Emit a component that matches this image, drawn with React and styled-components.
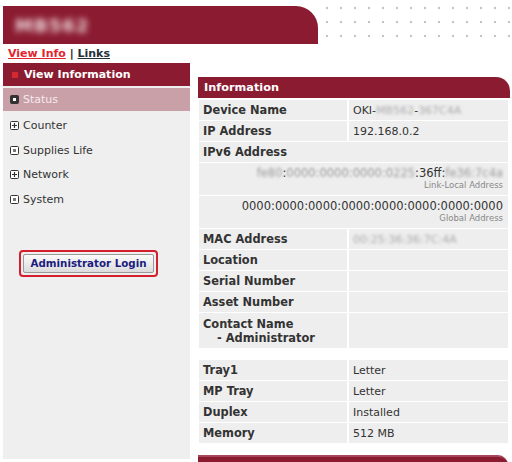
import styled, { createGlobalStyle } from "styled-components";

const Global = createGlobalStyle`
  body { margin: 0; background: #fff; font-family: "DejaVu Sans", Verdana, sans-serif; color: #333; }
`;

const RED = "#8b1b30";

const Page = styled.div`
  width: 512px;
  height: 462px;
  overflow: hidden;
  padding: 6px 2px 0 3px;
  box-sizing: border-box;
`;

const Header = styled.header`
  display: flex;
  height: 38px;
`;

const Banner = styled.div`
  width: 315px;
  background: ${RED};
  border-top-right-radius: 22px;
  display: flex;
  align-items: center;
  padding-left: 12px;
  box-sizing: border-box;
`;

const Blur = styled.span`
  display: inline-block;
  filter: blur(${(p) => p.$r || 1.6}px);
  color: ${(p) => p.$c || "#aaa"};
`;

const Title = styled.span`
  font-size: 18px;
  font-weight: bold;
  letter-spacing: 1px;
`;

const Dots = styled.div`
  flex: 1;
  margin-left: 2px;
  background-image: radial-gradient(circle, #c4c4c4 1.1px, transparent 1.6px);
  background-size: 14px 14px;
  background-position: 0 -5px;
`;

const Crumbs = styled.nav`
  font-size: 11px;
  font-weight: bold;
  padding: 3px 0 0 5px;
  height: 16px;
  color: #222;
`;

const Crumb = styled.a`
  color: ${(p) => (p.$active ? "#e2262f" : "#23303a")};
  text-decoration: underline;
`;

const Main = styled.div`
  display: flex;
  gap: 8px;
`;

const Sidebar = styled.aside`
  width: 187px;
  height: 396px;
  background: #efefef;
  flex-shrink: 0;
`;

const SideHead = styled.div`
  height: 23px;
  background: ${RED};
  color: #fff;
  font-weight: bold;
  font-size: 11px;
  display: flex;
  align-items: center;
  gap: 6px;
  padding-left: 9px;
`;

const Bullet = styled.span`
  width: 6px;
  height: 6px;
  background: #d42833;
`;

const NavList = styled.div`
  display: flex;
  flex-direction: column;
  padding-top: 2px;
`;

const NavItem = styled.div`
  height: ${(p) => (p.$active ? 23 : 24.7)}px;
  margin-bottom: ${(p) => (p.$active ? 2 : 0)}px;
  background: ${(p) => (p.$active ? "#c9a0a7" : "transparent")};
  color: ${(p) => (p.$active ? "#f4eaec" : "#333")};
  font-size: 11px;
  display: flex;
  align-items: center;
  gap: 4px;
  padding-left: 7px;
`;

const Box = ({ kind, dark }) => (
  <svg width="9" height="9" viewBox="0 0 9 9">
    <rect x="0.5" y="0.5" width="8" height="8" rx="1" fill={dark ? "#333" : "#fff"} stroke="#333" />
    {kind === "plus" ? (
      <path d="M2 4.5h5M4.5 2v5" stroke="#333" strokeWidth="1.2" />
    ) : (
      <rect x="3" y="3" width="3" height="3" fill={dark ? "#fff" : "#777"} />
    )}
  </svg>
);

const LoginWrap = styled.div`
  margin: 38px 0 0 16px;
  width: 139px;
  height: 27px;
  border: 2px solid #d61f2e;
  border-radius: 4px;
  box-sizing: border-box;
  padding: 2px;
  display: flex;
`;

const LoginButton = styled.button`
  flex: 1;
  border: 1px solid #9a9a9a;
  border-radius: 2px;
  background: linear-gradient(#fafafa, #dcdcdc);
  color: #1c1c80;
  font-family: "DejaVu Sans", Verdana, sans-serif;
  font-weight: bold;
  font-size: 10.3px;
  padding: 0;
`;

const Content = styled.section`
  flex: 1;
  padding-top: 14px;
`;

const PanelHead = styled.div`
  height: 21px;
  background: ${RED};
  border-top-right-radius: 14px;
  color: #fff;
  font-weight: bold;
  font-size: 11.3px;
  display: flex;
  align-items: center;
  padding-left: 6px;
`;

const Grid = styled.div`
  display: grid;
  grid-template-columns: 148px 1fr;
  gap: 1px 2px;
  margin: 2px 2px 0 1px;
  & + & { margin-top: 12px; }
`;

const Label = styled.div`
  background: #eeeeee;
  font-weight: bold;
  font-size: 11.4px;
  color: #333;
  padding: 0 4px;
  min-height: ${(p) => p.$h || 20}px;
  display: flex;
  flex-direction: column;
  justify-content: ${(p) => (p.$top ? "flex-start" : "center")};
  padding-top: ${(p) => (p.$top ? 4 : 0)}px;
  line-height: 14px;
  box-sizing: border-box;
  grid-column: ${(p) => (p.$wide ? "1 / -1" : "auto")};
`;

const Indent = styled.span`
  padding-left: 14px;
`;

const Value = styled.div`
  background: #eeeeee;
  font-size: 11px;
  color: #333;
  padding: 0 4px;
  min-height: ${(p) => p.$h || 20}px;
  display: flex;
  align-items: center;
`;

const Addr = styled.div`
  grid-column: 1 / -1;
  background: #eeeeee;
  height: 32px;
  padding: 3px 5px 0 0;
  box-sizing: border-box;
  text-align: right;
  font-size: 11.5px;
  color: #333;
  line-height: 14px;
`;

const Caption = styled.div`
  font-size: 8.5px;
  color: #888;
  line-height: 11px;
`;

const Footer = styled.div`
  margin: 12px 2px 0 0;
  height: 10px;
  background: ${RED};
  border-top-right-radius: 10px;
  border-top: 2px solid #a4485a;
`;

const navItems = [
  { name: "Status", kind: "dot", active: true },
  { name: "Counter", kind: "plus" },
  { name: "Supplies Life", kind: "dot" },
  { name: "Network", kind: "plus" },
  { name: "System", kind: "dot" },
];

const Row = ({ label, children, h, top }) => (
  <>
    <Label $h={h} $top={top}>{label}</Label>
    <Value $h={h}>{children}</Value>
  </>
);

export default function App() {
  return (
    <Page>
      <Global />
      <Header>
        <Banner>
          <Title><Blur $r={3} $c="#f0dde1">MB562</Blur></Title>
        </Banner>
        <Dots />
      </Header>
      <Crumbs>
        <Crumb $active>View Info</Crumb> | <Crumb>Links</Crumb>
      </Crumbs>
      <Main>
        <Sidebar>
          <SideHead><Bullet />View Information</SideHead>
          <NavList>
            {navItems.map((n) => (
              <NavItem key={n.name} $active={n.active}>
                <Box kind={n.kind} dark={n.active} />
                {n.name}
              </NavItem>
            ))}
          </NavList>
          <LoginWrap>
            <LoginButton>Administrator Login</LoginButton>
          </LoginWrap>
        </Sidebar>
        <Content>
          <PanelHead>Information</PanelHead>
          <Grid>
            <Row label="Device Name">
              OKI-<Blur>MB562</Blur>-<Blur>367C4A</Blur>
            </Row>
            <Row label="IP Address">192.168.0.2</Row>
            <Label $wide>IPv6 Address</Label>
            <Addr>
              <Blur $c="#999">fe80</Blur>:<Blur $r={1.1} $c="#999">0000:0000:0000:0</Blur>
              <Blur $c="#999">225</Blur>:36ff:<Blur $c="#999">fe36:7c4a</Blur>
              <Caption>Link-Local Address</Caption>
            </Addr>
            <Addr>
              0000:0000:0000:0000:0000:0000:0000:0000
              <Caption>Global Address</Caption>
            </Addr>
            <Row label="MAC Address">
              <Blur>00:25:36:36:7C:4A</Blur>
            </Row>
            <Row label="Location" />
            <Row label="Serial Number" />
            <Row label="Asset Number" />
            <Row
              label={
                <>
                  <span>Contact Name</span>
                  <Indent>- Administrator</Indent>
                </>
              }
              h={35}
              top
            />
          </Grid>
          <Grid>
            <Row label="Tray1">Letter</Row>
            <Row label="MP Tray">Letter</Row>
            <Row label="Duplex">Installed</Row>
            <Row label="Memory">512 MB</Row>
          </Grid>
          <Footer />
        </Content>
      </Main>
    </Page>
  );
}
